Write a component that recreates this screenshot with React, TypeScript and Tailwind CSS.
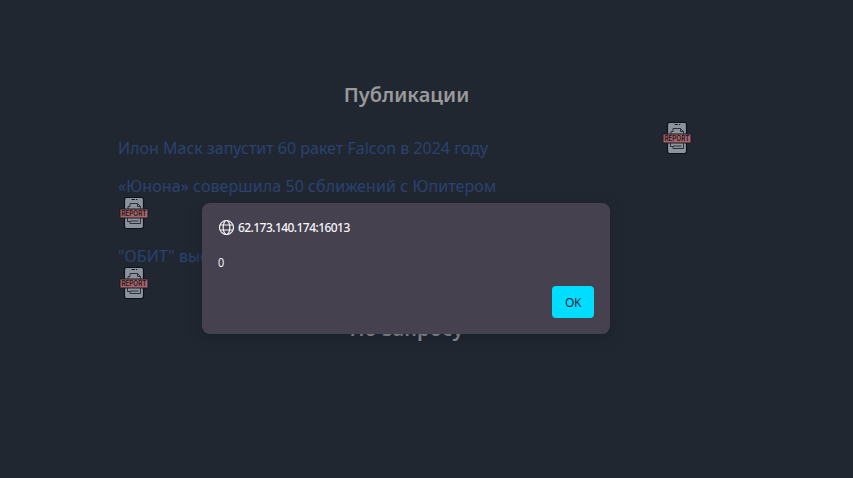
function ReportIcon() {
  return (
    <svg width="32" height="32" viewBox="0 0 32 32" className="block shrink-0 overflow-visible">
      <rect x="6.500" y="0.500" width="19" height="31" rx="2" fill="#8d939c" stroke="#0e1118" strokeWidth="1.200" />
      <path d="M13.500 2.500h3.500M18 2.500h1.300" stroke="#15181f" strokeWidth="1" />
      <path d="M10 12V9.500h2V6.500h7.500l3 3V12M19.500 6.500v3h3" fill="none" stroke="#2b303c" strokeWidth="1" />
      <path d="M9.500 21v3.500h2.500v2h10.500V21M12 24h8.500" fill="none" stroke="#2b303c" strokeWidth="1" />
      <rect x="2" y="12" width="28" height="9" rx="0.500" fill="#a86569" stroke="#171a21" strokeWidth="1" />
      <text x="3.400" y="19.200" textLength="25" lengthAdjust="spacingAndGlyphs" fontSize="7" fontWeight="600" fontFamily="Inter, sans-serif" fill="#1c161d">REPORT</text>
    </svg>
  );
}

function Globe() {
  return (
    <svg width="16" height="16" viewBox="0 0 16 16" fill="none" stroke="#f5f4f8" strokeWidth="1.2" className="shrink-0">
      <circle cx="8.500" cy="8.500" r="7" />
      <ellipse cx="8.500" cy="8.500" rx="3.3" ry="7" />
      <path d="M2.100 6h12.800M2.100 11h12.800" />
    </svg>
  );
}

export default function App() {
  return (
    <div className="relative h-[478px] w-full overflow-hidden bg-[#212731] font-['Noto_Sans',sans-serif]">
      <main className="ml-[118px] w-[577px] pt-20">
        <h2 className="text-center text-xl leading-[30px] font-semibold tracking-[0.03px] text-[#999a9c]">Публикации</h2>
        <div className="mt-3 flex h-[52px] justify-between pr-[2px] text-base leading-6 text-[#2a4270]">
          <a className="mt-[14px] whitespace-nowrap">Илон Маск запустит 60 ракет Falcon в 2024 году</a>
          <ReportIcon />
        </div>
        <div className="flex h-[70px] flex-col text-base leading-[23px] text-[#2a4270]">
          <a className="-mb-px pt-px tracking-[0.08px] whitespace-nowrap">«Юнона» совершила 50 сближений с Юпитером</a>
          <ReportIcon />
        </div>
        <div className="flex h-[70px] flex-col text-base leading-[23px] text-[#2a4270]">
          <a className="-mb-px pt-px tracking-[0.07px] whitespace-nowrap">"ОБИТ" выс</a>
          <ReportIcon />
        </div>
        <h2 className="text-center text-xl leading-[30px] font-semibold tracking-[0.15px] text-[#999a9c]">По запросу</h2>
      </main>
      <div role="dialog" className="absolute top-[203px] left-[202px] flex h-[131px] w-[408px] flex-col rounded-lg bg-[#45414e] p-4 text-xs text-[#f7f6fa] shadow-[0_4px_14px_rgba(13,27,38,0.4)]">
        <div className="flex h-4 items-center gap-1 font-medium">
          <Globe />
          <span className="pt-[2px] tracking-[-0.56px] whitespace-nowrap">62.173.140.174:16013</span>
        </div>
        <p className="mt-5 origin-left scale-x-90 leading-4">0</p>
        <button className="mt-[15px] h-8 w-[42px] self-end rounded bg-[#00ddff] pt-[2px] text-xs tracking-[-0.3px] text-[#15263a]">OK</button>
      </div>
    </div>
  );
}
